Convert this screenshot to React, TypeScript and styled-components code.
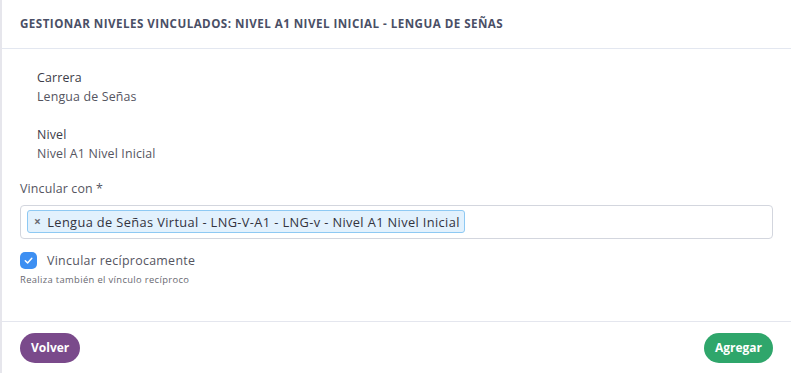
import React from "react";
import styled, { createGlobalStyle } from "styled-components";

const Global = createGlobalStyle`
  html, body { margin: 0; padding: 0; background: #ffffff; }
  body { font-family: "Open Sans", "Noto Sans", sans-serif; }
  * { box-sizing: border-box; }
`;

const Card = styled.div`
  width: 791px;
  height: 373px;
  border-left: 2px solid #e6e6ec;
  display: flex;
  flex-direction: column;
  background: #fff;
`;

const Header = styled.div`
  height: 49px;
  padding: 0 18px;
  display: flex;
  align-items: center;
  border-bottom: 1px solid #e3e7f0;
`;

const Title = styled.h1`
  margin: 0;
  font-size: 11.6px;
  font-weight: 700;
  color: #4a4f66;
  letter-spacing: 0.47px;
`;

const Body = styled.div`
  height: 274px;
  padding: 19px 18px 0;
  display: flex;
  flex-direction: column;
  border-bottom: 1px solid #e4e6ee;
`;

const Detail = styled.div`
  padding-left: 17px;
  margin-bottom: 19px;
  display: flex;
  flex-direction: column;
`;

const DetailLabel = styled.div`
  font-size: 12.4px;
  line-height: 19px;
  color: #3c3c48;
  letter-spacing: 0.15px;
`;

const DetailValue = styled.div`
  font-size: 12.4px;
  line-height: 19px;
  color: #55555f;
  letter-spacing: 0.15px;
`;

const FieldLabel = styled.div`
  font-size: 12.4px;
  line-height: 19px;
  color: #55555f;
  letter-spacing: 0.15px;
  margin-top: -3px;
  margin-bottom: 7px;
`;

const Select = styled.div`
  height: 34px;
  border: 1px solid #d3d6de;
  border-radius: 4px;
  display: flex;
  align-items: center;
  padding: 0 6px;
`;

const Tag = styled.span`
  display: inline-flex;
  align-items: center;
  height: 23px;
  padding: 0 4px 0 6px;
  gap: 6px;
  background: #e2f1fd;
  border: 1px solid #8ec9f3;
  border-radius: 3px;
  font-size: 12.8px;
  letter-spacing: 0.38px;
  color: #33333d;
`;

const TagX = styled.span`
  font-size: 12px;
  font-weight: 700;
  color: #6b6b74;
`;

const CheckRow = styled.label`
  display: flex;
  align-items: center;
  gap: 10px;
  margin-top: 13px;
`;

const Box = styled.span`
  width: 17px;
  height: 17px;
  border-radius: 5px;
  background: #3d8ff2;
  display: flex;
  align-items: center;
  justify-content: center;
`;

const CheckText = styled.span`
  font-size: 12.4px;
  letter-spacing: 0.3px;
  color: #55555f;
`;

const Help = styled.div`
  font-size: 9.4px;
  letter-spacing: 0.35px;
  color: #6a6a72;
  margin-top: 4px;
`;

const Footer = styled.div`
  height: 51px;
  padding: 0 18px;
  display: flex;
  align-items: center;
  justify-content: space-between;
`;

const Button = styled.button<{ $bg: string }>`
  height: 30px;
  border: none;
  border-radius: 15px;
  padding: 0 11px;
  background: ${(p) => p.$bg};
  color: #fff;
  font-family: "Open Sans", sans-serif;
  font-weight: 700;
  font-size: 12px;
`;

export default function App() {
  return (
    <>
      <Global />
      <Card>
        <Header>
          <Title>GESTIONAR NIVELES VINCULADOS: NIVEL A1 NIVEL INICIAL - LENGUA DE SEÑAS</Title>
        </Header>
        <Body>
          <Detail>
            <DetailLabel>Carrera</DetailLabel>
            <DetailValue>Lengua de Señas</DetailValue>
          </Detail>
          <Detail>
            <DetailLabel>Nivel</DetailLabel>
            <DetailValue>Nivel A1 Nivel Inicial</DetailValue>
          </Detail>
          <FieldLabel>Vincular con *</FieldLabel>
          <Select>
            <Tag>
              <TagX>×</TagX>
              Lengua de Señas Virtual - LNG-V-A1 - LNG-v - Nivel A1 Nivel Inicial
            </Tag>
          </Select>
          <CheckRow>
            <Box>
              <svg width="11" height="11" viewBox="0 0 12 12">
                <path d="M2.5 6.3 L5 8.6 L9.6 3.6" fill="none" stroke="#fff" strokeWidth="1.6" strokeLinecap="round" strokeLinejoin="round" />
              </svg>
            </Box>
            <CheckText>Vincular recíprocamente</CheckText>
          </CheckRow>
          <Help>Realiza también el vínculo recíproco</Help>
        </Body>
        <Footer>
          <Button $bg="#7a4a8b">Volver</Button>
          <Button $bg="#2fa66b">Agregar</Button>
        </Footer>
      </Card>
    </>
  );
}
